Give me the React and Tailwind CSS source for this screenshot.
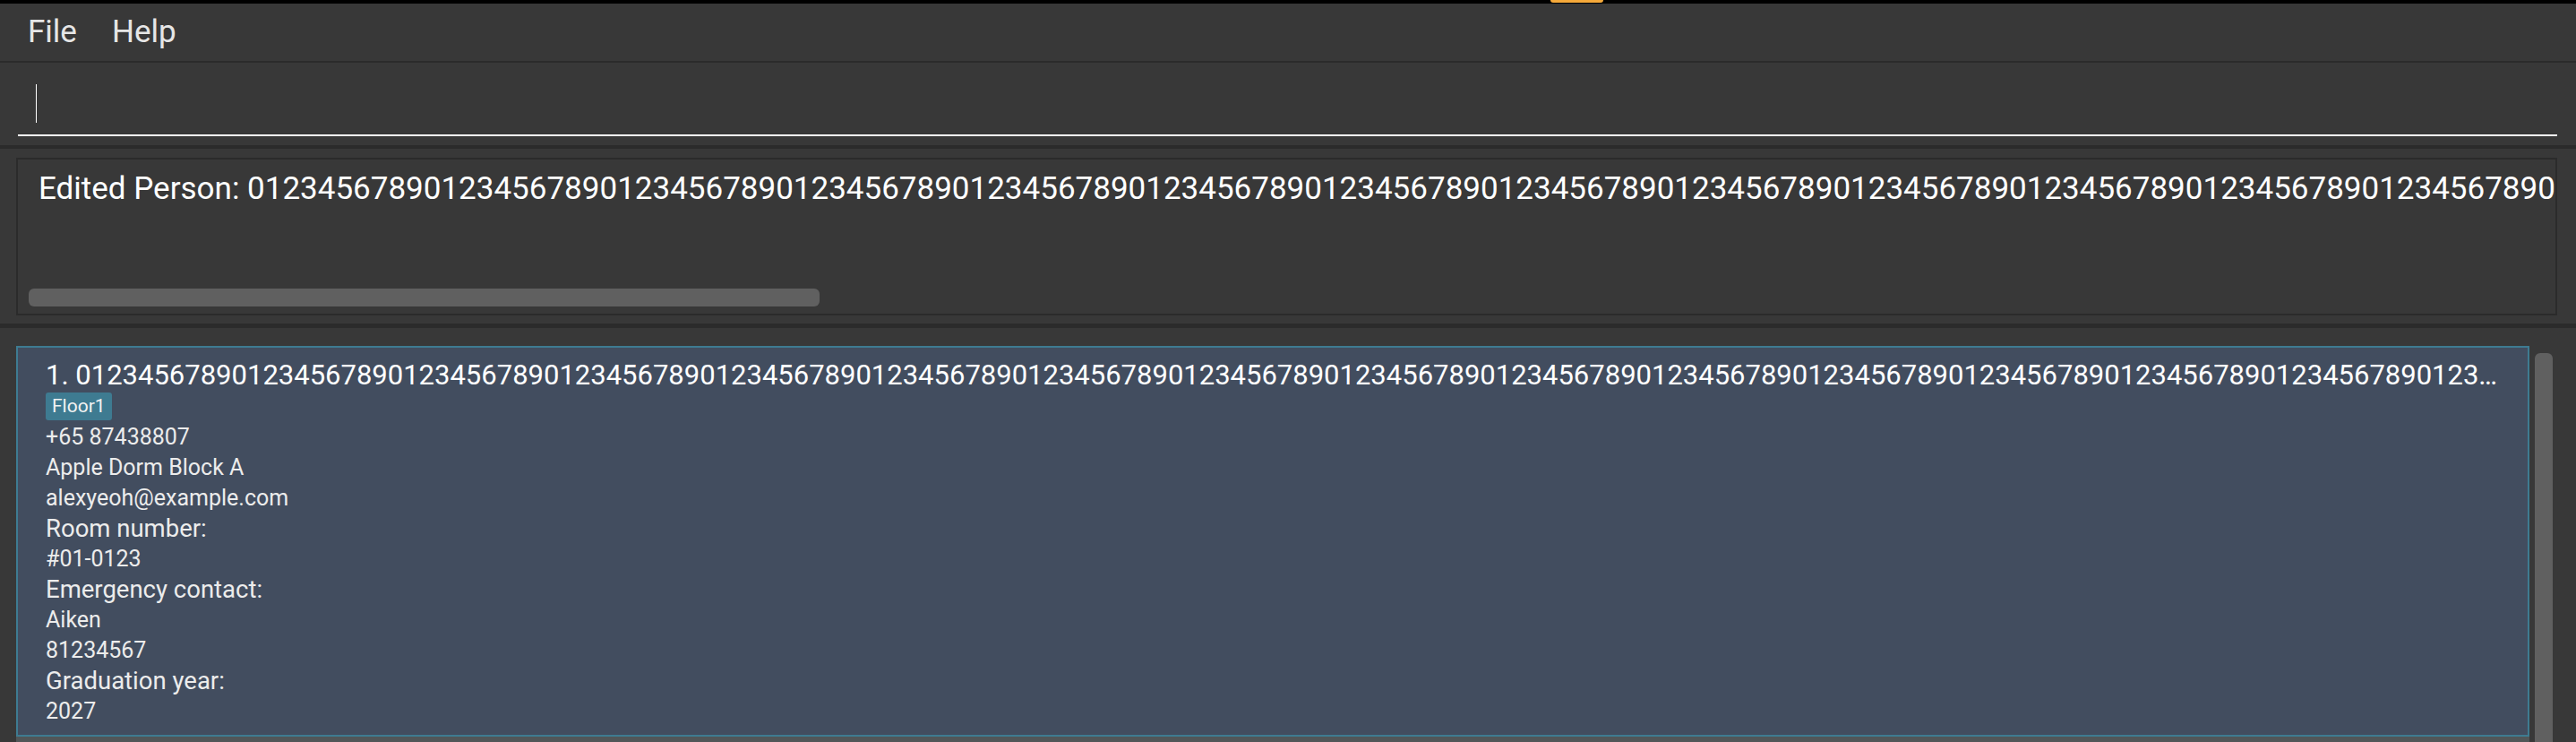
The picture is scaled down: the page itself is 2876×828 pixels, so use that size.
const NAME = '0123456789'.repeat(20);

const DETAILS = [
  { text: '+65 87438807', label: false },
  { text: 'Apple Dorm Block A', label: false },
  { text: 'alexyeoh@example.com', label: false },
  { text: 'Room number:', label: true },
  { text: '#01-0123', label: false },
  { text: 'Emergency contact:', label: true },
  { text: 'Aiken', label: false },
  { text: '81234567', label: false },
  { text: 'Graduation year:', label: true },
  { text: '2027', label: false },
];

function PersonCard({ index, name, tags }) {
  return (
    <div className="border-2 border-[#3e7b91] bg-[#424d5f] pl-[31px] pr-[25px] pt-[13px] pb-[9px] text-white">
      <div className="flex h-[36px] items-center text-[31px] leading-[36px]">
        <span className="shrink-0 whitespace-pre">{index}. </span>
        <span className="min-w-0 truncate">{name}</span>
      </div>
      <div className="mt-[1px] flex h-[31px] gap-2">
        {tags.map(t => (
          <span key={t} className="flex items-center rounded-[3px] bg-[#3e7b91] px-[7px] text-[21px] text-[#f2f2f2]">
            {t}
          </span>
        ))}
      </div>
      <div className="mt-[2px] flex flex-col">
        {DETAILS.map((d, i) => (
          <div key={i} className={`h-[34px] whitespace-nowrap leading-[34px] text-[#ececec] ${d.label ? 'text-[27.5px]' : 'text-[25px]'}`}>
            {d.text}
          </div>
        ))}
      </div>
    </div>
  );
}

export default function App() {
  return (
    <div className="flex h-[828px] w-[2876px] flex-col overflow-hidden bg-[#383838] font-['Roboto',sans-serif]">
      {/* barra preta do topo */}
      <div className="flex h-[4px] shrink-0 bg-black">
        <div className="ml-[1731px] h-[3px] w-[59px] rounded-b-[4px] bg-[#f5a93a]" />
      </div>

      {/* menu */}
      <div className="flex h-[64px] shrink-0 items-center gap-[39px] pl-[31px] text-[35px] text-[#e6e6e6]">
        <span>File</span>
        <span>Help</span>
      </div>
      <div className="h-[2px] shrink-0 bg-[#2b2b2b]" />

      {/* caixa de comando */}
      <div className="h-[92px] shrink-0 pl-[20px] pr-[21px]">
        <div className="ml-[20px] mt-[24px] h-[43px] w-px bg-white" />
        <div className="mt-[13px] h-[2px] bg-white" />
      </div>
      <div className="h-[4px] shrink-0 bg-[#2b2b2b]" />

      {/* resultado */}
      <div className="h-[195px] shrink-0 pl-[18px] pr-[21px] pt-[10px]">
        <div className="flex h-[176px] flex-col justify-between border-2 border-[#2b2b2b]">
          <div className="overflow-hidden whitespace-nowrap pl-[23px] pt-[12px] text-[35px] leading-[41px] text-white">
            Edited Person: {NAME}
          </div>
          <div className="mb-[8px] ml-[12px] h-[20px] w-[883px] rounded-[6px] bg-[#606060]" />
        </div>
      </div>
      <div className="h-[5px] shrink-0 bg-[#2b2b2b]" />

      {/* lista de pessoas */}
      <div className="flex min-h-0 flex-1 gap-[6px] pl-[18px] pr-[26px]">
        <div className="flex min-w-0 flex-1 flex-col pt-[20px]">
          <PersonCard index={1} name={NAME} tags={['Floor1']} />
          <div className="h-[40px] shrink-0 bg-[#515658]" />
        </div>
        <div className="w-[20px] shrink-0 pt-[28px]">
          <div className="h-full rounded-t-[6px] bg-[#606060]" />
        </div>
      </div>
    </div>
  );
}
